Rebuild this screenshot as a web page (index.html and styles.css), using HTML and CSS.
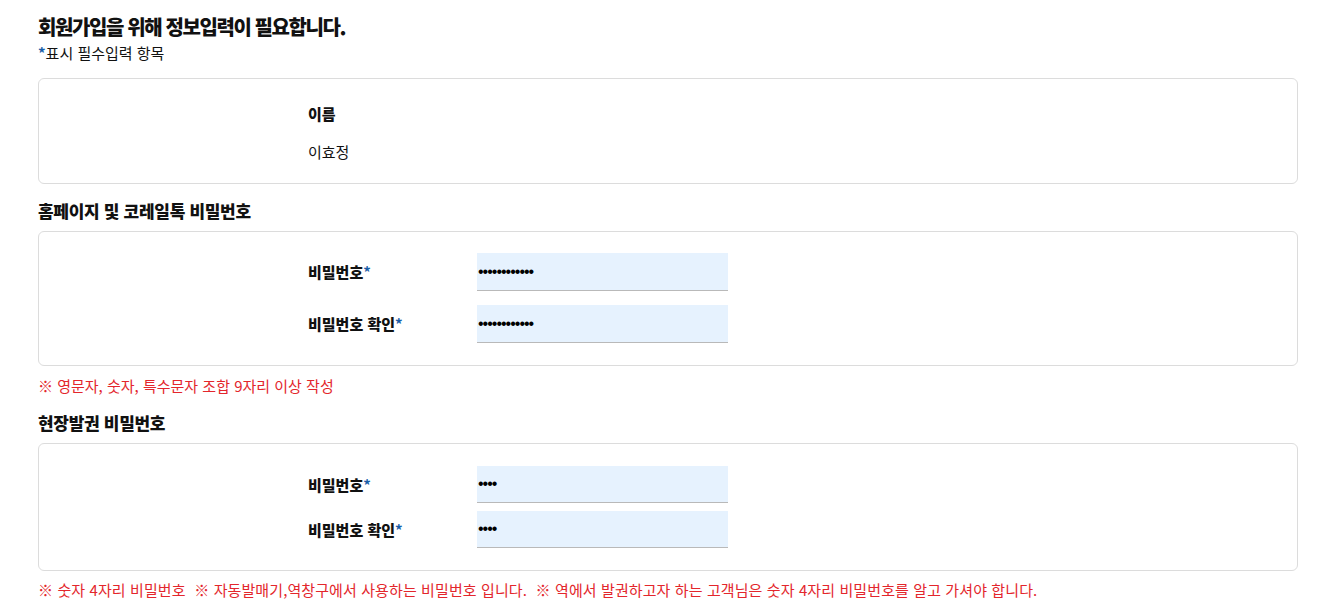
FILE: index.html
```html
<!DOCTYPE html>
<html lang="ko">
<head>
<meta charset="utf-8">
<title>회원가입</title>
<link rel="stylesheet" href="styles.css">
</head>
<body>
<div class="page">
  <h1 class="title">회원가입을 위해 정보입력이 필요합니다.</h1>
  <p class="sub"><span class="req">*</span>표시 필수입력 항목</p>

  <section class="box box-name">
    <div class="name-block">
      <div class="name-label">이름</div>
      <div class="name-value">이효정</div>
    </div>
  </section>

  <h2 class="section-title">홈페이지 및 코레일톡 비밀번호</h2>
  <section class="box box-pw">
    <div class="row">
      <label class="label">비밀번호<span class="req">*</span></label>
      <input class="field" type="password" value="abcdefghijkl">
    </div>
    <div class="row">
      <label class="label">비밀번호 확인<span class="req">*</span></label>
      <input class="field" type="password" value="abcdefghijkl">
    </div>
  </section>
  <p class="note">※ 영문자, 숫자, 특수문자 조합 9자리 이상 작성</p>

  <h2 class="section-title">현장발권 비밀번호</h2>
  <section class="box box-pin">
    <div class="row">
      <label class="label">비밀번호<span class="req">*</span></label>
      <input class="field field-sm" type="password" value="1234">
    </div>
    <div class="row">
      <label class="label">비밀번호 확인<span class="req">*</span></label>
      <input class="field field-sm" type="password" value="1234">
    </div>
  </section>
  <p class="note note-last">※ 숫자 4자리 비밀번호&nbsp; ※ 자동발매기,역창구에서 사용하는 비밀번호 입니다.&nbsp; ※ 역에서 발권하고자 하는 고객님은 숫자 4자리 비밀번호를 알고 가셔야 합니다.</p>
</div>
</body>
</html>
```

FILE: styles.css
```css
* { box-sizing: border-box; }
html, body { margin: 0; padding: 0; background: #fff; }
body {
  font-family: "Noto Sans CJK KR", "Noto Sans", sans-serif;
  color: #111;
}
.page {
  padding: 14px 40px 0 38px;
}
.title {
  margin: 0;
  font-size: 20px;
  line-height: 26px;
  font-weight: 800;
  letter-spacing: -1.4px;
}
.sub {
  margin: 3px 0 0;
  font-size: 15px;
  line-height: 20px;
}
.req { color: #1a5ea8; font-weight: 700; }
.box {
  border: 1px solid #dcdcdc;
  border-radius: 6px;
  background: #fff;
}
.box-name {
  margin-top: 15px;
  padding: 25px 0 21px 269px;
}
.name-label {
  font-size: 15px;
  line-height: 20px;
  font-weight: 800;
}
.name-value {
  margin-top: 18px;
  font-size: 15px;
  line-height: 20px;
}
.section-title {
  margin: 16px 0 0;
  font-size: 17px;
  line-height: 22px;
  font-weight: 800;
  letter-spacing: -0.3px;
}
.box-pw {
  margin-top: 9px;
  padding: 21px 0 22px 269px;
  display: flex;
  flex-direction: column;
  gap: 14px;
}
.box-pin {
  margin-top: 9px;
  padding: 22px 0 22px 269px;
  display: flex;
  flex-direction: column;
  gap: 8px;
}
.row {
  display: flex;
  align-items: center;
}
.label {
  width: 169px;
  font-size: 15px;
  line-height: 20px;
  font-weight: 800;
}
.field {
  width: 251px;
  height: 38px;
  border: 0;
  border-bottom: 1px solid #b9b9b9;
  background: #e6f2fe;
  padding: 0 0 0 1px;
  font-family: "Liberation Sans", sans-serif;
  font-size: 16px;
  letter-spacing: -1px;
  color: #000;
  outline: none;
}
.field-sm { height: 37px; }
.note {
  margin: 10px 0 0;
  font-size: 15px;
  line-height: 20px;
  color: #e3262c;
}
.note-last { margin-top: 9px; letter-spacing: 0.1px; }
```
